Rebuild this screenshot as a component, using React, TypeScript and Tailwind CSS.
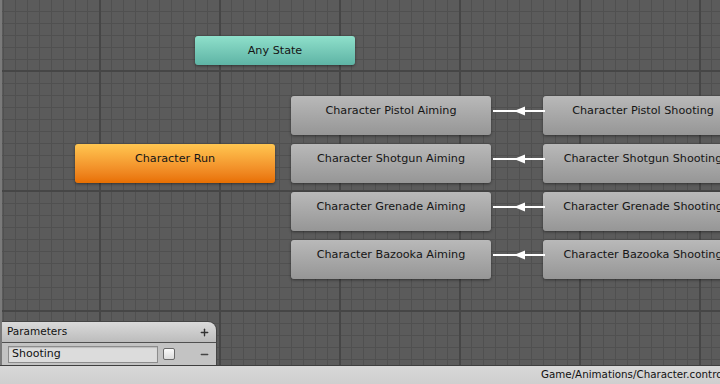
import { Plus, Minus } from 'lucide-react';

const aiming = ['Pistol', 'Shotgun', 'Grenade', 'Bazooka'];

const font = "font-['DejaVu_Sans',sans-serif]";

function Node({ label, x, y, w, h, tone }: { label: string; x: number; y: number; w: number; h: number; tone: string }) {
  return (
    <div
      className={`absolute rounded-[3px] pt-[8px] text-center text-[11.2px] leading-[14px] text-[#151515] whitespace-nowrap shadow-[0_1px_3px_rgba(0,0,0,0.45)] ${tone}`}
      style={{ left: x, top: y, width: w, height: h }}
    >
      {label}
    </div>
  );
}

function Arrow({ y }: { y: number }) {
  return (
    <svg className="absolute" style={{ left: 491, top: y - 5 }} width="52" height="10" viewBox="0 0 52 10">
      <rect x="0" y="4" width="52" height="2" fill="#ffffff" />
      <polygon points="21,5 32,0.5 32,9.5" fill="#ffffff" />
    </svg>
  );
}

const gray = 'bg-gradient-to-b from-[#b9b9b9] to-[#969696]';

export default function App() {
  return (
    <div className={`flex h-[384px] w-[720px] flex-col overflow-hidden ${font}`}>
      <div className="relative h-[365px] overflow-hidden border-l-2 border-[#7a7a7a] bg-[#5b5b5b] bg-[linear-gradient(to_right,#464646_2px,transparent_2px),linear-gradient(to_bottom,#464646_2px,transparent_2px),linear-gradient(to_right,#505050_1px,transparent_1px),linear-gradient(to_bottom,#505050_1px,transparent_1px)] [background-size:120px_120px,120px_120px,12px_12px,12px_12px] [background-position:97px_70px,97px_70px,1px_11px,1px_11px]">
        <Node label="Any State" x={193} y={36} w={160} h={29} tone="bg-gradient-to-b from-[#8fe0cb] to-[#5eb4a5]" />
        <Node label="Character Run" x={73} y={144} w={200} h={39} tone="bg-gradient-to-b from-[#ffc650] to-[#e86f00]" />

        {aiming.map((name, i) => (
          <div key={name}>
            <Node label={`Character ${name} Aiming`} x={289} y={96 + i * 48} w={200} h={39} tone={gray} />
            <Node label={`Character ${name} Shooting`} x={541} y={96 + i * 48} w={200} h={39} tone={gray} />
            <Arrow y={111 + i * 48} />
          </div>
        ))}

        <div className="absolute bottom-0 left-[-2px] flex w-[217px] flex-col overflow-hidden rounded-tr-[9px] border-r border-t border-[#444] text-[10.5px] text-[#111]">
          <div className="flex h-[21px] items-center justify-between border-b border-[#505050] bg-gradient-to-b from-[#dadada] to-[#bcbcbc] pl-[7px] pr-[6px]">
            <span>Parameters</span>
            <Plus className="h-[11px] w-[11px] text-[#333]" strokeWidth={3} />
          </div>
          <div className="flex h-[22px] items-center bg-[#c3c3c3] pl-[8px] pr-[6px]">
            <div className="flex h-[17px] w-[150px] items-center border border-[#8c8c8c] bg-[#dcdcdc] pl-[3px] text-[11px] shadow-[inset_0_1px_1px_rgba(0,0,0,0.15)]">
              Shooting
            </div>
            <div className="ml-[5px] h-[12px] w-[12px] rounded-[2px] border border-[#6a6a6a] bg-gradient-to-b from-[#fafafa] to-[#dcdcdc]" />
            <Minus className="ml-auto h-[11px] w-[11px] text-[#444]" strokeWidth={3} />
          </div>
        </div>
      </div>
      <div className="flex h-[19px] items-center overflow-hidden whitespace-nowrap border-t border-[#3e3e3e] bg-gradient-to-b from-[#d8d8d8] to-[#cfcfcf] pl-[541px] text-[10.3px] text-[#111]">
        Game/Animations/Character.controller
      </div>
    </div>
  );
}
